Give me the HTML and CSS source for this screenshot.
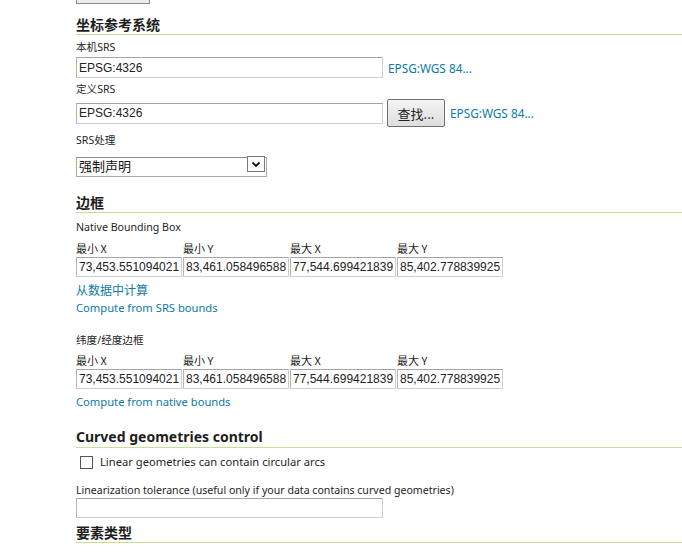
FILE: index.html
```html
<!DOCTYPE html>
<html lang="zh">
<head>
<meta charset="utf-8">
<title>图层编辑</title>
<link rel="stylesheet" href="styles.css">
</head>
<body>
<div class="page">
  <div class="topbox"></div>

  <h2 class="section cjk-h">坐标参考系统</h2>
  <label class="lbl first">本机SRS</label>
  <div class="row r1">
    <input class="txt wide" type="text" value="EPSG:4326">
    <a class="link srs" href="#">EPSG:WGS 84...</a>
  </div>
  <label class="lbl l2">定义SRS</label>
  <div class="row r2">
    <input class="txt wide" type="text" value="EPSG:4326">
    <button class="btn" type="button">查找...</button>
    <a class="link srs2" href="#">EPSG:WGS 84...</a>
  </div>
  <label class="lbl l3">SRS处理</label>
  <div class="selwrap">
    <select class="sel"><option>强制声明</option></select>
    <span class="arrow"><svg width="10" height="7" viewBox="0 0 10 7"><path d="M1.5 1.5 L5 5 L8.5 1.5" fill="none" stroke="#111" stroke-width="1.8"/></svg></span>
  </div>

  <h2 class="section s2 cjk-h">边框</h2>
  <label class="lbl nb">Native Bounding Box</label>
  <div class="bounds b1">
    <div class="col"><span class="clbl">最小 X</span><input class="txt num" type="text" value="73,453.551094021"></div>
    <div class="col"><span class="clbl">最小 Y</span><input class="txt num" type="text" value="83,461.058496588"></div>
    <div class="col"><span class="clbl">最大 X</span><input class="txt num" type="text" value="77,544.699421839"></div>
    <div class="col"><span class="clbl">最大 Y</span><input class="txt num" type="text" value="85,402.778839925"></div>
  </div>
  <a class="link block cjk-link" href="#">从数据中计算</a>
  <a class="link block l-srs" href="#">Compute from SRS bounds</a>

  <label class="lbl ll">纬度/经度边框</label>
  <div class="bounds b2">
    <div class="col"><span class="clbl">最小 X</span><input class="txt num" type="text" value="73,453.551094021"></div>
    <div class="col"><span class="clbl">最小 Y</span><input class="txt num" type="text" value="83,461.058496588"></div>
    <div class="col"><span class="clbl">最大 X</span><input class="txt num" type="text" value="77,544.699421839"></div>
    <div class="col"><span class="clbl">最大 Y</span><input class="txt num" type="text" value="85,402.778839925"></div>
  </div>
  <a class="link block l-nat" href="#">Compute from native bounds</a>

  <h2 class="section s3">Curved geometries control</h2>
  <div class="check">
    <input class="cb" type="checkbox" id="arcs">
    <label for="arcs" class="cblbl">Linear geometries can contain circular arcs</label>
  </div>
  <label class="lbl lt">Linearization tolerance (useful only if your data contains curved geometries)</label>
  <input class="txt wide tol" type="text" value="">

  <h2 class="section s4 cjk-h">要素类型</h2>
</div>
</body>
</html>
```

FILE: styles.css
```css
html, body {
  margin: 0;
  padding: 0;
  background: #fff;
}
body {
  font-family: "Noto Sans", "Noto Sans CJK SC", sans-serif;
  color: #222;
  width: 682px;
  height: 555px;
  overflow: hidden;
}
.page {
  margin-left: 76px;
  display: flex;
  flex-direction: column;
  align-items: flex-start;
}
.topbox {
  width: 72px;
  height: 3px;
  border: 1px solid #8a8a8a;
  border-top: none;
  background: #ececec;
}
.section {
  align-self: stretch;
  margin: 10px 0 0 0;
  height: 20px;
  line-height: 20px;
  font-size: 14px;
  font-weight: bold;
  color: #1e1e1e;
  border-bottom: 1px solid #c4df98;
}
.cjk-h {
  font-family: "Noto Sans CJK SC", sans-serif;
  font-size: 14px;
}
.s2 { margin-top: 18px; }
.s3 { margin-top: 17px; }
.s4 { margin-top: 4px; }

.lbl {
  display: block;
  font-size: 10.6px;
  line-height: 14px;
  height: 14px;
  color: #1e1e1e;
}
.first { margin-top: 5px; }
.l2 { margin-top: 4px; }
.l3 { margin-top: 6px; }
.nb { margin-top: 7px; }
.ll { margin-top: 17px; }
.lt { margin-top: 13px; }

.row {
  display: flex;
  align-items: center;
}
.r1 { margin-top: 3px; }
.r2 { margin-top: 3px; height: 28px; }

.txt {
  box-sizing: border-box;
  height: 21px;
  margin: 0;
  padding: 0 2px;
  border: 1px solid #cfcfcf;
  border-top-color: #a5a5a5;
  border-left-color: #b5b5b5;
  font-family: "Liberation Sans", Arial, sans-serif;
  font-size: 12px;
  color: #222;
  background: #fff;
  outline: none;
}
.wide { width: 307px; }
.tol { margin-top: 1px; height: 20px; }

.link {
  color: #0c7aa6;
  text-decoration: none;
  font-size: 11.8px;
  line-height: 16px;
}
.srs { margin-left: 5px; }
.srs2 { margin-left: 5px; }
.block { display: block; }
.cjk-link {
  margin-top: 5px;
  font-family: "Noto Sans CJK SC", sans-serif;
  font-size: 12px;
}
.l-srs { margin-top: 2px; font-size: 11.2px; }
.l-nat { margin-top: 5px; font-size: 11.2px; }

.btn {
  box-sizing: border-box;
  margin-left: 4px;
  width: 58px;
  height: 28px;
  border: 1px solid #707070;
  border-radius: 2px;
  background: linear-gradient(#f4f4f4, #dedede);
  font-family: "Noto Sans CJK SC", sans-serif;
  font-size: 13px;
  color: #222;
  padding: 0;
}

.selwrap {
  position: relative;
  margin-top: 7px;
  width: 191px;
  height: 20px;
}
.sel {
  -webkit-appearance: none;
  appearance: none;
  box-sizing: border-box;
  width: 191px;
  height: 20px;
  margin: 0;
  padding: 0 0 2px 2px;
  border: 1px solid #a9a9a9;
  border-top-color: #8e8e8e;
  background: #fff;
  font-family: "Noto Sans CJK SC", sans-serif;
  font-size: 13px;
  line-height: 16px;
  color: #111;
  border-radius: 0;
}
.arrow {
  position: absolute;
  right: 2px;
  top: 2px;
  box-sizing: border-box;
  width: 18px;
  height: 16px;
  border: 1px solid #7a7a7a;
  background: #fafafa;
  display: flex;
  align-items: center;
  justify-content: center;
  pointer-events: none;
}

.bounds {
  display: grid;
  grid-template-columns: repeat(4, 107px);
}
.b1 { margin-top: 7px; }
.b2 { margin-top: 6px; }
.col {
  display: flex;
  flex-direction: column;
}
.clbl {
  font-family: "Noto Sans CJK SC", sans-serif;
  font-size: 11px;
  line-height: 14px;
  height: 14px;
  color: #1e1e1e;
}
.num {
  margin-top: 2px;
  width: 106px;
  height: 20px;
  padding: 0 2px;
}

.check {
  display: flex;
  align-items: center;
  margin-top: 6px;
  height: 16px;
}
.cb {
  -webkit-appearance: none;
  appearance: none;
  box-sizing: border-box;
  width: 13px;
  height: 13px;
  margin: 0 0 0 4px;
  border: 1px solid #555;
  background: #fff;
  border-radius: 0;
}
.cblbl {
  margin-left: 7px;
  font-size: 11.2px;
  line-height: 16px;
  color: #1e1e1e;
}
```
